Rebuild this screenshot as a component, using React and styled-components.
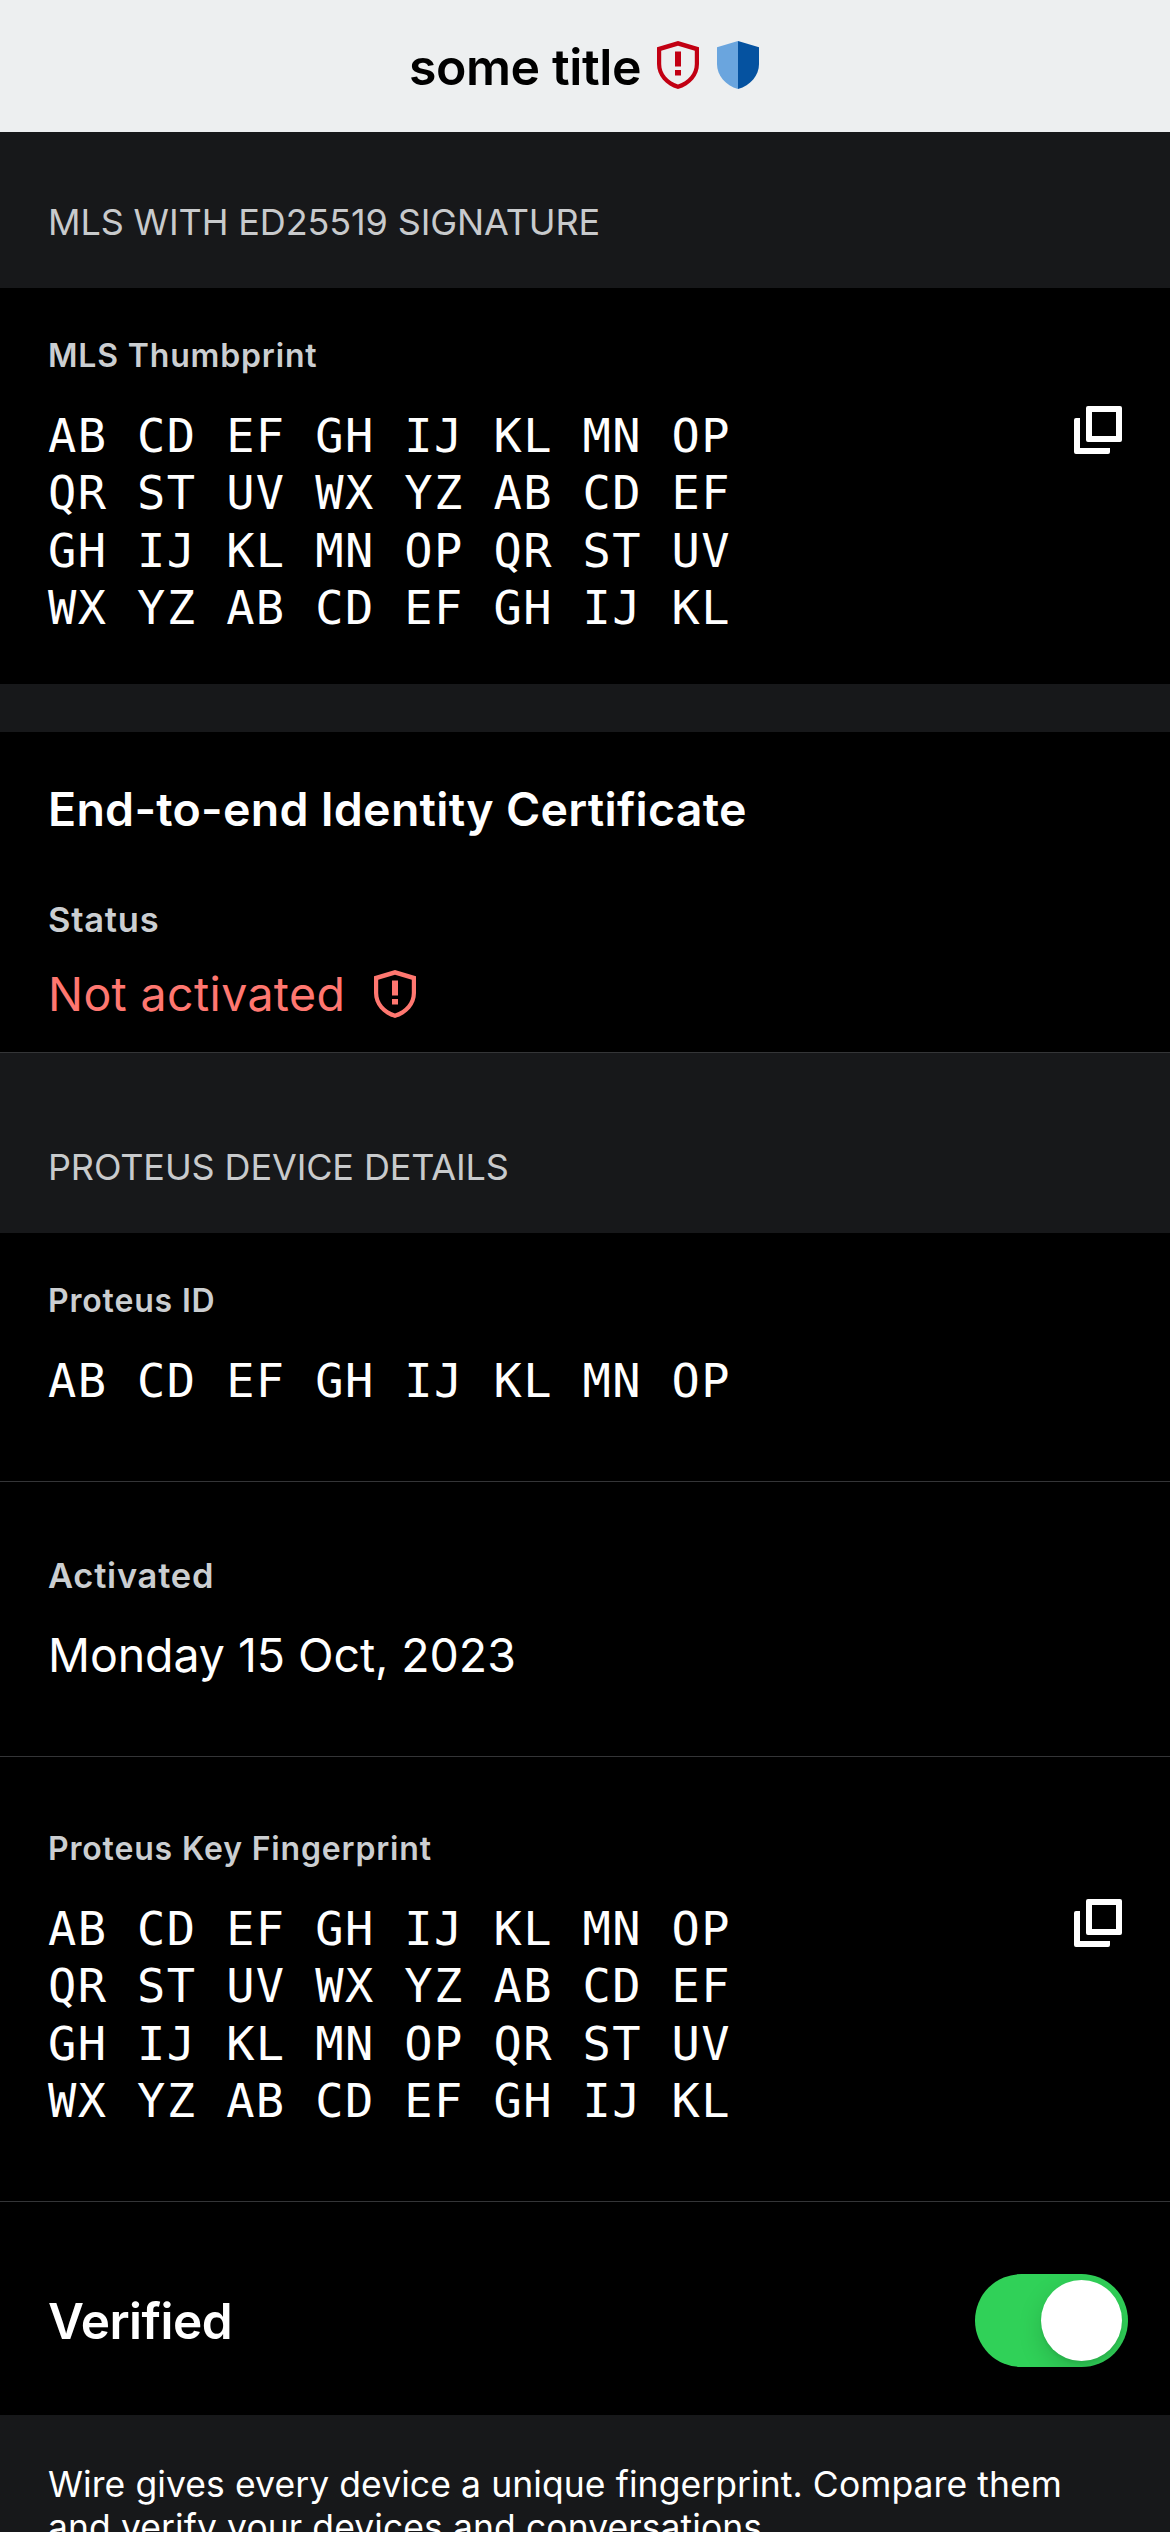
import React from 'react';
import styled, { createGlobalStyle } from 'styled-components';

const Global = createGlobalStyle`
  * { box-sizing: border-box; }
  body { margin: 0; background: #17181a; }
`;

const Screen = styled.main`
  display: flex;
  flex-direction: column;
  width: 1170px;
  height: 2532px;
  overflow: hidden;
  background: #17181a;
  font-family: Inter, "Liberation Sans", sans-serif;
  font-kerning: normal;
`;

const Header = styled.header`
  display: flex;
  flex: none;
  align-items: center;
  justify-content: center;
  height: 132px;
  gap: 18px;
  padding: 0 2px 2px 0;
  background: #edeff0;
`;

const Title = styled.h1`
  margin: 0 -2px 0 0;
  padding-top: 3px;
  font-size: 50px;
  line-height: 60px;
  font-weight: 600;
  letter-spacing: -0.4px;
  color: #000;
`;

const SectionHeading = styled.h2`
  flex: none;
  margin: 0;
  height: ${(p) => p.$height}px;
  padding: ${(p) => p.$top}px 48px 0;
  font-size: 36px;
  line-height: 44px;
  font-weight: 400;
  letter-spacing: -0.12px;
  color: #c8cacc;
`;

const Card = styled.section`
  display: flex;
  flex: none;
  flex-direction: column;
  height: ${(p) => p.$height}px;
  padding: ${(p) => p.$top}px 48px 0;
  background: #000;
  border-bottom: ${(p) => (p.$divided ? '1px solid #343537' : 'none')};
`;

const Gap = styled.div`
  flex: none;
  height: 48px;
`;

const Label = styled.div`
  font-size: ${(p) => (p.$large ? 34.5 : 32)}px;
  line-height: ${(p) => (p.$large ? 42 : 40)}px;
  font-weight: 600;
  letter-spacing: ${(p) => (p.$large ? 0.75 : 0.83)}px;
  color: #cbced1;
`;

const CardTitle = styled.h3`
  margin: 0 0 61px;
  font-size: 46.5px;
  line-height: 58px;
  font-weight: 600;
  letter-spacing: 0.26px;
  color: #fff;
`;

const Value = styled.div`
  display: flex;
  align-items: center;
  gap: 29px;
  margin-top: ${(p) => p.$gap}px;
  font-size: 46.5px;
  line-height: 58px;
  letter-spacing: ${(p) => (p.$alert ? 0.35 : -0.08)}px;
  color: ${(p) => (p.$alert ? '#ff7770' : '#fff')};
`;

const KeyRow = styled.div`
  display: flex;
  align-items: flex-start;
  justify-content: space-between;
  margin-top: 31px;
`;

const KeyText = styled.div`
  font-family: "DejaVu Sans Mono", "Liberation Mono", monospace;
  font-size: 47px;
  line-height: 57.33px;
  letter-spacing: 1.4px;
  white-space: pre;
  color: #fff;
`;

const CopyButton = styled.button`
  display: flex;
  margin: -1px 0 0;
  padding: 0;
  border: 0;
  background: none;
`;

const VerifiedRow = styled.section`
  display: flex;
  flex: none;
  align-items: center;
  justify-content: space-between;
  height: 213px;
  padding: 24px 42px 0 48px;
  background: #000;
`;

const VerifiedLabel = styled.div`
  font-size: 49.5px;
  line-height: 60px;
  font-weight: 600;
  letter-spacing: -0.5px;
  color: #fff;
`;

const Switch = styled.div`
  display: flex;
  align-items: center;
  justify-content: flex-end;
  width: 153px;
  height: 93px;
  padding: 6px;
  border-radius: 47px;
  overflow: hidden;
  background: #30d158;
`;

const Thumb = styled.div`
  width: 81px;
  height: 81px;
  border-radius: 50%;
  background: #fff;
  box-shadow: 0 9px 24px rgba(0, 0, 0, 0.15), 0 3px 3px rgba(0, 0, 0, 0.06);
`;

const Footnote = styled.p`
  margin: 0;
  padding: 48px 48px 0;
  font-size: 35.5px;
  line-height: 43px;
  letter-spacing: 0.08px;
  color: #fff;
`;

const ShieldAlert = ({ color }) => (
  <svg width="42" height="48" viewBox="0 0 42 48" fill={color}>
    <path
      fillRule="evenodd"
      d="M21 0L42 6.2V23C42 34.5 33.5 44.5 21 48C8.5 44.5 0 34.5 0 23V6.2ZM21 4.8L4.2 9.8V23C4.2 32.2 10.8 40.3 21 43.4C31.2 40.3 37.8 32.2 37.8 23V9.8Z"
    />
    <path d="M18 10.5h6v15h-6zM18 29h6v5.5h-6z" />
  </svg>
);

const ShieldVerified = () => (
  <svg width="42" height="48" viewBox="0 0 42 48">
    <path d="M21 0L0 6.2V23C0 34.5 8.5 44.5 21 48Z" fill="#6aa5de" />
    <path d="M21 0L42 6.2V23C42 34.5 33.5 44.5 21 48Z" fill="#0552a0" />
  </svg>
);

const CopyIcon = () => (
  <svg width="48" height="48" viewBox="0 0 48 48" fill="#fff">
    <path
      fillRule="evenodd"
      d="M14 0H46A2 2 0 0 1 48 2V34A2 2 0 0 1 46 36H14A2 2 0 0 1 12 34V2A2 2 0 0 1 14 0ZM18 6V30H42V6Z"
    />
    <path d="M2 12H6V42H36V46A2 2 0 0 1 34 48H2A2 2 0 0 1 0 46V14A2 2 0 0 1 2 12Z" />
  </svg>
);

const KEY = [
  'AB CD EF GH IJ KL MN OP',
  'QR ST UV WX YZ AB CD EF',
  'GH IJ KL MN OP QR ST UV',
  'WX YZ AB CD EF GH IJ KL',
];

const KeyBlock = ({ lines, copy }) => (
  <KeyRow>
    <KeyText>{lines.join('\n')}</KeyText>
    {copy && (
      <CopyButton aria-label="Copy">
        <CopyIcon />
      </CopyButton>
    )}
  </KeyRow>
);

export default function App() {
  return (
    <>
      <Global />
      <Screen>
        <Header>
          <Title>some title</Title>
          <ShieldAlert color="#c20013" />
          <ShieldVerified />
        </Header>
        <SectionHeading $height={156} $top={68}>MLS WITH ED25519 SIGNATURE</SectionHeading>
        <Card $height={396} $top={48}>
          <Label>MLS Thumbprint</Label>
          <KeyBlock lines={KEY} copy />
        </Card>
        <Gap />
        <Card $height={321} $top={48} $divided>
          <CardTitle>End-to-end Identity Certificate</CardTitle>
          <Label $large>Status</Label>
          <Value $gap={24} $alert>
            Not activated
            <ShieldAlert color="#ff7770" />
          </Value>
        </Card>
        <SectionHeading $height={180} $top={92}>PROTEUS DEVICE DETAILS</SectionHeading>
        <Card $height={249} $top={48} $divided>
          <Label>Proteus ID</Label>
          <KeyBlock lines={KEY.slice(0, 1)} />
        </Card>
        <Card $height={275} $top={73} $divided>
          <Label $large>Activated</Label>
          <Value $gap={29}>Monday 15 Oct, 2023</Value>
        </Card>
        <Card $height={445} $top={72} $divided>
          <Label>Proteus Key Fingerprint</Label>
          <KeyBlock lines={KEY} copy />
        </Card>
        <VerifiedRow>
          <VerifiedLabel>Verified</VerifiedLabel>
          <Switch>
            <Thumb />
          </Switch>
        </VerifiedRow>
        <Footnote>
          Wire gives every device a unique fingerprint. Compare them
          <br />
          and verify your devices and conversations
        </Footnote>
      </Screen>
    </>
  );
}
